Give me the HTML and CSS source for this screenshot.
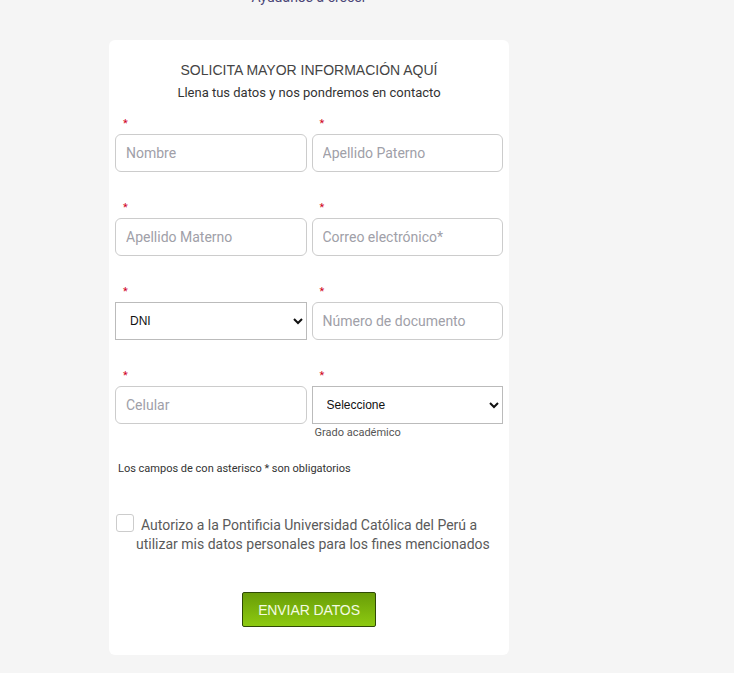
FILE: index.html
```html
<!DOCTYPE html>
<html lang="es">
<head>
  <meta charset="UTF-8">
  <meta name="viewport" content="width=device-width, initial-scale=1.0">
  <title>Solicita información</title>
  <link rel="stylesheet" href="styles.css">
</head>
<body>

  <div class="page">
    <p class="top-link">Ayúdanos a crecer</p>

    <!-- Formulario -->
    <form class="card">
      <h2>SOLICITA MAYOR INFORMACIÓN AQUÍ</h2>
      <p class="subtitle">Llena tus datos y nos pondremos en contacto</p>

      <div class="fields">
        <div class="field">
          <span class="req">*</span>
          <input type="text" placeholder="Nombre">
        </div>
        <div class="field">
          <span class="req">*</span>
          <input type="text" placeholder="Apellido Paterno">
        </div>
        <div class="field">
          <span class="req">*</span>
          <input type="text" placeholder="Apellido Materno">
        </div>
        <div class="field">
          <span class="req">*</span>
          <input type="email" placeholder="Correo electrónico*">
        </div>
        <div class="field">
          <span class="req">*</span>
          <select>
            <option>DNI</option>
            <option>Carné de extranjería</option>
            <option>Pasaporte</option>
          </select>
        </div>
        <div class="field">
          <span class="req">*</span>
          <input type="text" placeholder="Número de documento">
        </div>
        <div class="field">
          <span class="req">*</span>
          <input type="tel" placeholder="Celular">
        </div>
        <div class="field">
          <span class="req">*</span>
          <select>
            <option>Seleccione</option>
            <option>Secundaria</option>
            <option>Bachiller</option>
          </select>
          <small>Grado académico</small>
        </div>
      </div>

      <p class="note">Los campos de con asterisco * son obligatorios</p>

      <label class="consent">
        <input type="checkbox">Autorizo a la Pontificia Universidad Católica del Perú a utilizar mis datos personales para los fines mencionados
      </label>

      <div class="actions">
        <button type="button">ENVIAR DATOS</button>
      </div>
    </form>
  </div>

</body>
</html>
```

FILE: styles.css
```css
* {
  margin: 0;
  padding: 0;
  box-sizing: border-box;
}

body {
  font-family: Roboto, 'Liberation Sans', Arial, sans-serif;
  background: #f5f5f5;
  color: #333;
  min-height: 100vh;
  overflow: hidden;
}

.page {
  width: 400px;
  margin-left: 109px;
}

.top-link {
  margin-top: -12px;
  height: 52px;
  text-align: center;
  font-size: 14px;
  line-height: 18px;
  color: #4a4577;
}

/* Card */
.card {
  background: #fff;
  border-radius: 6px;
  padding: 20px 6px 28px;
}

.card h2 {
  font-family: 'Liberation Sans', Arial, sans-serif;
  font-weight: 400;
  font-size: 14px;
  line-height: 20px;
  color: #444;
  text-align: center;
}

.subtitle {
  margin-top: 4px;
  font-size: 13px;
  line-height: 18px;
  color: #333;
  text-align: center;
}

.fields {
  margin-top: 14px;
  display: grid;
  grid-template-columns: minmax(0, 1fr) minmax(0, 1fr);
  column-gap: 5px;
  row-gap: 28px;
  align-items: start;
}

.field {
  display: flex;
  flex-direction: column;
  min-width: 0;
}

.req {
  display: block;
  height: 16px;
  margin-bottom: 2px;
  padding-left: 8px;
  font-size: 11px;
  line-height: 16px;
  color: #d0021b;
}

.field input {
  width: 100%;
  height: 38px;
  border: 1px solid #ccc;
  border-radius: 6px;
  padding: 0 10px;
  font-family: Roboto, sans-serif;
  font-size: 14px;
  color: #333;
  background: #fff;
}

.field input::placeholder {
  color: #a0a0a8;
}

.field select {
  width: 100%;
  height: 38px;
  border: 1px solid #bbb;
  border-radius: 0;
  padding: 0 6px 0 10px;
  font-family: 'Liberation Sans', Arial, sans-serif;
  font-size: 12px;
  color: #111;
  background: #fff;
}

.field small {
  margin-top: 2px;
  padding-left: 3px;
  font-size: 11px;
  line-height: 14px;
  color: #555;
}

.note {
  margin-top: 22px;
  padding-left: 3px;
  font-size: 11px;
  line-height: 14px;
  color: #333;
}

/* Autorización */
.consent {
  display: block;
  margin-top: 38px;
  padding-left: 21px;
  padding-right: 8px;
  font-size: 14px;
  line-height: 19px;
  color: #5a5a5a;
}

.consent input {
  -webkit-appearance: none;
  appearance: none;
  display: inline-block;
  width: 18px;
  height: 18px;
  margin-left: -20px;
  margin-right: 7px;
  vertical-align: -2px;
  border: 1px solid #ccc;
  border-radius: 3px;
  background: #fff;
}

.actions {
  margin-top: 38px;
  text-align: center;
}

.actions button {
  width: 134px;
  height: 35px;
  font-family: 'Liberation Sans', Arial, sans-serif;
  font-size: 14px;
  letter-spacing: -0.1px;
  color: #f3fbe2;
  background: linear-gradient(#699d08, #8dca10);
  border: 1px solid #2f4a06;
  border-radius: 2px;
  cursor: pointer;
}
```
